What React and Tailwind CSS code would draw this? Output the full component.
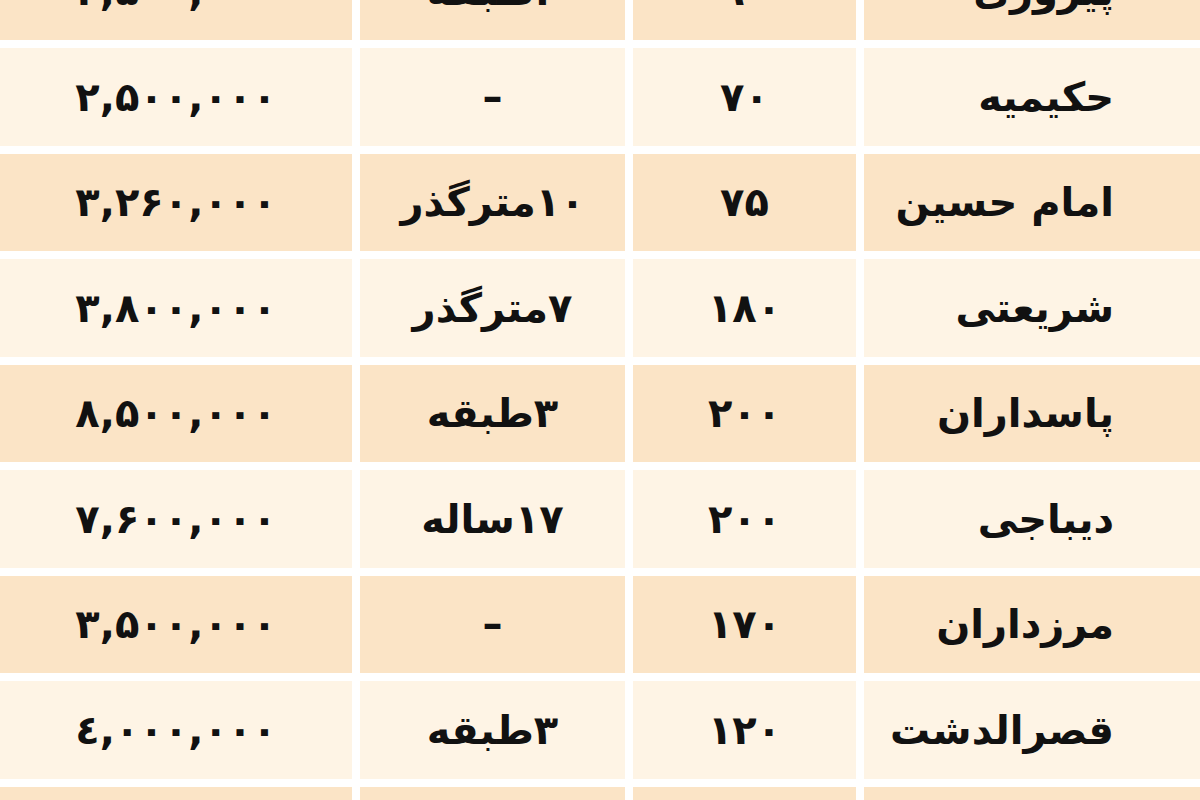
const rows = [
  { price: '۴,۵۰۰,۰۰۰', note: '۳طبقه', area: '۹۰', place: 'پیروزی' },
  { price: '۲,۵۰۰,۰۰۰', note: '–', area: '۷۰', place: 'حکیمیه' },
  { price: '۳,۲۶۰,۰۰۰', note: '۱۰مترگذر', area: '۷۵', place: 'امام حسین' },
  { price: '۳,۸۰۰,۰۰۰', note: '۷مترگذر', area: '۱۸۰', place: 'شریعتی' },
  { price: '۸,۵۰۰,۰۰۰', note: '۳طبقه', area: '۲۰۰', place: 'پاسداران' },
  { price: '۷,۶۰۰,۰۰۰', note: '۱۷ساله', area: '۲۰۰', place: 'دیباجی' },
  { price: '۳,۵۰۰,۰۰۰', note: '–', area: '۱۷۰', place: 'مرزداران' },
  { price: '٤,٠٠٠,٠٠٠', note: '۳طبقه', area: '۱۲۰', place: 'قصرالدشت' },
  { price: '', note: '', area: '', place: '' },
]

export default function App() {
  return (
    <div className="w-[1200px] h-[800px] overflow-hidden bg-white">
      <div
        className="-mt-[57.5px] flex flex-col gap-2 text-[#111] font-bold text-[40px] leading-none"
        style={{ fontFamily: '"DejaVu Sans", "Noto Sans", sans-serif' }}
      >
        {rows.map((r, i) => {
          const bg = i % 2 === 0 ? 'bg-[#fbe4c6]' : 'bg-[#fef4e5]'
          return (
            <div key={i} className="grid grid-cols-[352px_265px_223px_1fr] gap-x-2 h-[97.5px]">
              <div className={`${bg} flex items-center justify-center tracking-[1px]`} dir="ltr">{r.price}</div>
              <div className={`${bg} flex items-center justify-center`} dir="rtl">{r.note}</div>
              <div className={`${bg} flex items-center justify-center`} dir="rtl">{r.area}</div>
              <div className={`${bg} flex items-center justify-start pr-[86px]`} dir="rtl">{r.place}</div>
            </div>
          )
        })}
      </div>
    </div>
  )
}
